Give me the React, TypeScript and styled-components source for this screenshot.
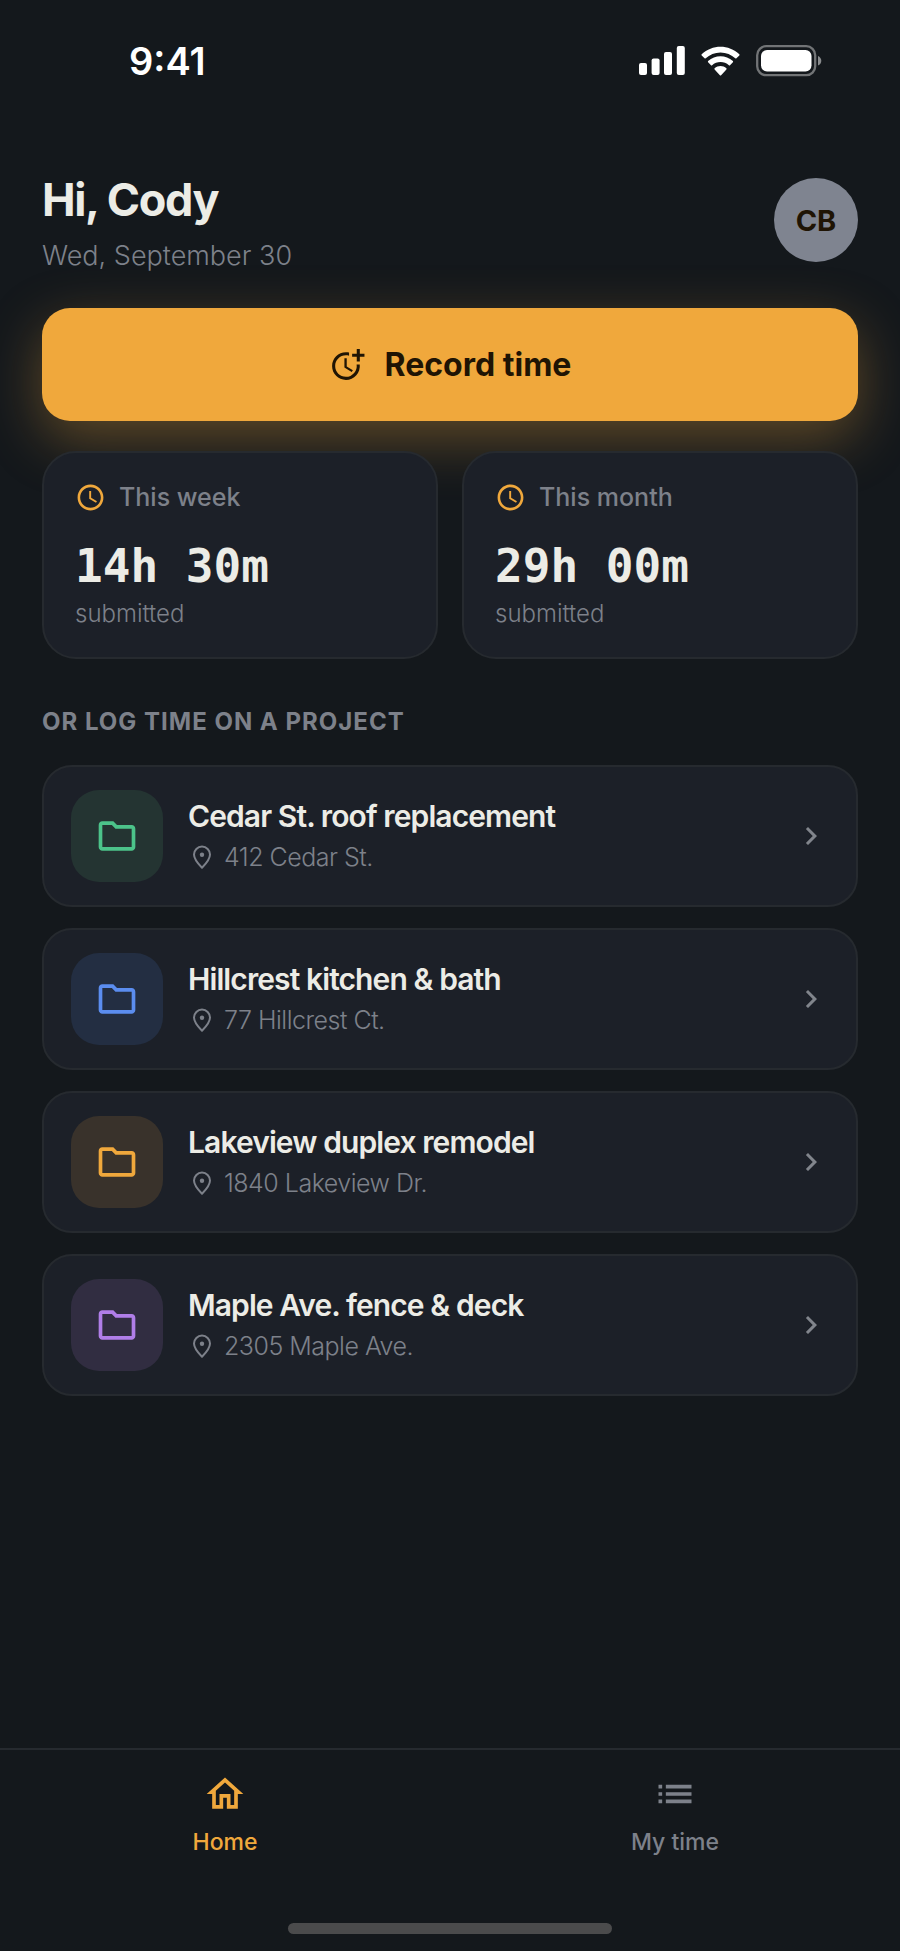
import React from "react";
import styled, { createGlobalStyle } from "styled-components";
import { MdAccessTime, MdChevronRight, MdList, MdMoreTime, MdOutlineFolder, MdOutlineHome } from "react-icons/md";

const color = {
  bg: "#14181c",
  card: "#1c2028",
  line: "#262a2f",
  text: "#ecece6",
  label: "#7d818a",
  amber: "#f0a83c",
  ink: "#1f1404",
};

const GlobalStyle = createGlobalStyle`
  * { box-sizing: border-box; }
  body {
    margin: 0;
    background: ${color.bg};
    color: ${color.text};
    font-family: Inter, "Liberation Sans", sans-serif;
    -webkit-font-smoothing: antialiased;
  }
  h1, h2, h3, p, ul { margin: 0; padding: 0; }
  button { font: inherit; border: 0; cursor: pointer; }
  a { color: inherit; text-decoration: none; }
  svg { display: block; flex: none; }
`;

const Screen = styled.div`
  display: flex;
  flex-direction: column;
  min-height: 100vh;
`;

const StatusBar = styled.div`
  display: flex;
  justify-content: space-between;
  align-items: center;
  height: 121px;
  padding: 0 78px 0 129px;
  color: #fff;
`;

const Clock = styled.time`
  font-size: 38px;
  font-weight: 600;
  line-height: 40px;
`;

const StatusIcons = styled.div`
  display: flex;
  align-items: center;
  gap: 15px;
`;

const Main = styled.main`
  flex: 1;
  padding: 49px 42px 48px;
`;

const Header = styled.header`
  display: flex;
  justify-content: space-between;
  align-items: center;
  margin-bottom: 38px;
`;

const Greeting = styled.h1`
  font-size: 45px;
  font-weight: 700;
  line-height: 60px;
  letter-spacing: -0.03em;
`;

const Today = styled.p`
  margin-top: 12px;
  font-size: 27px;
  font-weight: 300;
  line-height: 28px;
  color: ${color.label};
`;

const Avatar = styled.button`
  width: 84px;
  height: 84px;
  padding: 0;
  border-radius: 50%;
  background: #7f8490;
  color: ${color.ink};
  font-size: 29px;
  font-weight: 700;
`;

const RecordButton = styled.button`
  display: flex;
  align-items: center;
  justify-content: center;
  gap: 19px;
  width: 100%;
  height: 113px;
  border-radius: 28px;
  background: ${color.amber};
  color: ${color.ink};
  font-size: 32px;
  font-weight: 700;
  box-shadow: 0 18px 55px rgba(240, 168, 60, 0.34);
`;

const Stats = styled.section`
  position: relative;
  display: grid;
  grid-template-columns: 1fr 1fr;
  gap: 24px;
  margin-top: 30px;
`;

const StatCard = styled.article`
  height: 208px;
  padding: 28px 31px;
  border: 2px solid ${color.line};
  border-radius: 34px;
  background: ${color.card};
`;

const StatLabel = styled.h2`
  display: flex;
  align-items: center;
  gap: 13px;
  font-size: 25px;
  font-weight: 500;
  line-height: 32px;
  color: ${color.label};

  svg { color: ${color.amber}; }
`;

const StatValue = styled.p`
  margin-top: 26px;
  font-family: "DejaVu Sans Mono", "Liberation Mono", monospace;
  font-size: 46px;
  font-weight: 700;
  line-height: 54px;
`;

const StatNote = styled.p`
  font-size: 24px;
  font-weight: 300;
  line-height: 42px;
  color: ${color.label};
`;

const SectionTitle = styled.h2`
  margin: 47px 0 27px;
  font-size: 24px;
  font-weight: 700;
  line-height: 32px;
  letter-spacing: 1px;
  text-transform: uppercase;
  color: ${color.label};
`;

const ProjectList = styled.ul`
  display: grid;
  gap: 21px;
  list-style: none;
`;

const ProjectRow = styled.a`
  display: flex;
  align-items: center;
  height: 142px;
  padding: 0 27px;
  border: 2px solid ${color.line};
  border-radius: 30px;
  background: ${color.card};
`;

const FolderTile = styled.span<{ $tint: string; $bg: string }>`
  display: grid;
  place-items: center;
  width: 92px;
  height: 92px;
  border-radius: 28px;
  background: ${(p) => p.$bg};
  color: ${(p) => p.$tint};
`;

const ProjectText = styled.span`
  flex: 1;
  display: block;
  margin-left: 25px;
  padding-top: 2px;
`;

const ProjectName = styled.h3`
  font-size: 30px;
  font-weight: 600;
  line-height: 40px;
  letter-spacing: -0.03em;
`;

const Address = styled.p`
  display: flex;
  align-items: center;
  gap: 8px;
  font-size: 25px;
  font-weight: 300;
  line-height: 42px;
  letter-spacing: -0.02em;
  color: ${color.label};
`;

const Chevron = styled.span`
  color: #81858c;
`;

const TabBar = styled.nav`
  display: grid;
  grid-template-columns: 1fr 1fr;
  border-top: 2px solid ${color.line};
`;

const Tab = styled.a<{ $active?: boolean }>`
  display: flex;
  flex-direction: column;
  align-items: center;
  gap: 10px;
  padding: 22px 0;
  font-size: 23px;
  font-weight: 500;
  line-height: 32px;
  color: ${(p) => (p.$active ? color.amber : color.label)};
`;

const HomeIndicator = styled.div`
  width: 36%;
  height: 11px;
  margin: 43px auto 17px;
  border-radius: 6px;
  background: #4b4b4c;
`;

const SignalIcon = () => (
  <svg width="46" height="30" viewBox="0 0 46 30" fill="currentColor" aria-hidden="true">
    <rect x="0" y="17" width="8" height="12" rx="2" />
    <rect x="12.6" y="12.5" width="8" height="16.5" rx="2" />
    <rect x="25" y="6" width="8" height="23" rx="2" />
    <rect x="37.8" y="0" width="8" height="29" rx="2" />
  </svg>
);

const WifiIcon = () => (
  <svg width="41" height="30" viewBox="1 0 39 29" fill="currentColor" aria-hidden="true">
    <path d="M20.5 6.2c5.5 0 10.5 2.1 14.3 5.7.3.3.8.3 1.1 0l2.8-2.8c.3-.3.3-.9 0-1.2C28.500-1.800 12.500-1.800 2.300 7.900c-.3.300-.3.900 0 1.200l2.800 2.800c.3.300.8.300 1.100 0C10 8.300 15 6.200 20.500 6.200z" />
    <path d="M20.5 15.5c3 0 5.900 1.100 8.100 3.100.3.300.8.300 1.100 0l2.800-2.800c.3-.3.300-.9 0-1.200-6.800-6.300-17.200-6.300-24 0-.3.300-.3.900 0 1.200l2.800 2.800c.3.300.8.300 1.100 0 2.200-2 5.100-3.100 8.100-3.100z" />
    <path d="M26.2 21.5c.3.300.3.900 0 1.200l-5.100 5.500c-.3.300-.9.300-1.200 0l-5.100-5.500c-.3-.3-.3-.9 0-1.200 3.200-2.800 8.200-2.800 11.400 0z" />
  </svg>
);

const BatteryIcon = () => (
  <svg width="66" height="32" viewBox="0 0 66 32" fill="none" aria-hidden="true">
    <rect x="1.2" y="1.2" width="58" height="29" rx="9" stroke="#fff" strokeOpacity="0.4" strokeWidth="2.3" />
    <rect x="5" y="5" width="50.5" height="21.5" rx="6" fill="#fff" />
    <path d="M62 11c2 .8 3.300 2.700 3.300 4.800S64 19.800 62 20.600z" fill="#fff" fillOpacity="0.5" />
  </svg>
);

const PinIcon = () => (
  <svg width="28" height="28" viewBox="0 0 28 28" fill="none" stroke="currentColor" aria-hidden="true">
    <path d="M14 24.8c-4.800-4.800-8-9-8-13.200a8 8 0 0 1 16 0c0 4.200-3.200 8.400-8 13.200z" strokeWidth="2" strokeLinejoin="round" />
    <circle cx="14" cy="11.7" r="2.2" fill="currentColor" stroke="none" />
  </svg>
);

const stats = [
  { label: "This week", value: "14h 30m" },
  { label: "This month", value: "29h 00m" },
];

const projects = [
  { name: "Cedar St. roof replacement", address: "412 Cedar St.", tint: "#4cc38a", bg: "#243432" },
  { name: "Hillcrest kitchen & bath", address: "77 Hillcrest Ct.", tint: "#5b8def", bg: "#232e42" },
  { name: "Lakeview duplex remodel", address: "1840 Lakeview Dr.", tint: "#f0a83c", bg: "#39322b" },
  { name: "Maple Ave. fence & deck", address: "2305 Maple Ave.", tint: "#b07ee8", bg: "#312d41" },
];

export default function App() {
  return (
    <Screen>
      <GlobalStyle />
      <StatusBar>
        <Clock>9:41</Clock>
        <StatusIcons>
          <SignalIcon />
          <WifiIcon />
          <BatteryIcon />
        </StatusIcons>
      </StatusBar>

      <Main>
        <Header>
          <div>
            <Greeting>Hi, Cody</Greeting>
            <Today>Wed, September 30</Today>
          </div>
          <Avatar type="button">CB</Avatar>
        </Header>

        <RecordButton type="button">
          <MdMoreTime size={37} aria-hidden="true" />
          Record time
        </RecordButton>

        <Stats>
          {stats.map((s) => (
            <StatCard key={s.label}>
              <StatLabel>
                <MdAccessTime size={31} aria-hidden="true" />
                {s.label}
              </StatLabel>
              <StatValue>{s.value}</StatValue>
              <StatNote>submitted</StatNote>
            </StatCard>
          ))}
        </Stats>

        <SectionTitle>Or log time on a project</SectionTitle>
        <ProjectList>
          {projects.map((p) => (
            <li key={p.name}>
              <ProjectRow href="#">
                <FolderTile $tint={p.tint} $bg={p.bg}>
                  <MdOutlineFolder size={44} aria-hidden="true" />
                </FolderTile>
                <ProjectText>
                  <ProjectName>{p.name}</ProjectName>
                  <Address>
                    <PinIcon />
                    {p.address}
                  </Address>
                </ProjectText>
                <Chevron>
                  <MdChevronRight size={36} aria-hidden="true" />
                </Chevron>
              </ProjectRow>
            </li>
          ))}
        </ProjectList>
      </Main>

      <TabBar>
        <Tab href="#" $active aria-current="page">
          <MdOutlineHome size={44} aria-hidden="true" />
          Home
        </Tab>
        <Tab href="#">
          <MdList size={44} aria-hidden="true" />
          My time
        </Tab>
      </TabBar>
      <HomeIndicator />
    </Screen>
  );
}
